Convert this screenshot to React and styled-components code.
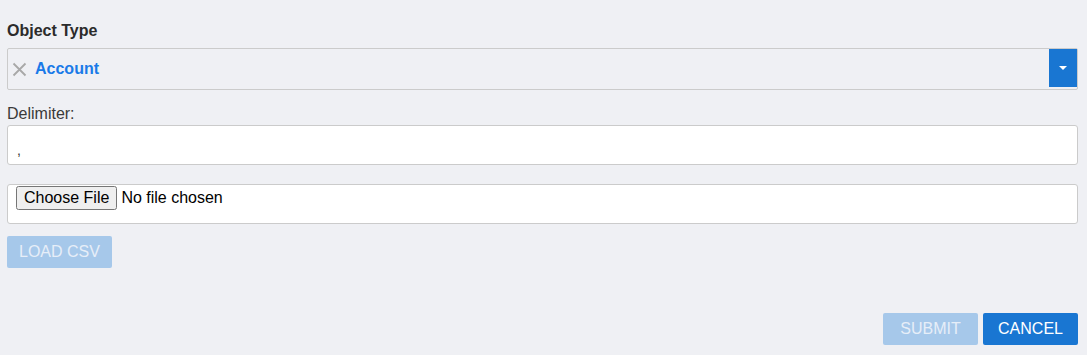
import React from "react";
import styled, { createGlobalStyle } from "styled-components";

const GlobalStyle = createGlobalStyle`
  html, body {
    margin: 0;
    padding: 0;
    background: #eff0f4;
    font-family: "Liberation Sans", Arial, sans-serif;
  }
`;

const Page = styled.div`
  display: flex;
  flex-direction: column;
  height: 355px;
  box-sizing: border-box;
  padding: 22px 9px 10px 7px;
`;

const Label = styled.label`
  display: block;
  font-size: 16px;
  font-weight: ${(p) => (p.bold ? 700 : 400)};
  color: ${(p) => (p.bold ? "#2b2b2b" : "#3a3a3a")};
  line-height: 18px;
  margin-bottom: ${(p) => (p.bold ? "8px" : "2px")};
`;

const SelectBox = styled.div`
  display: flex;
  align-items: center;
  height: 42px;
  box-sizing: border-box;
  border: 1px solid #cbcbcb;
  border-radius: 2px;
  background: #eff0f4;
  padding: 0 0 0 4px;
`;

const ClearIcon = styled.svg`
  width: 15px;
  height: 15px;
  flex: none;
  margin-right: 8px;
`;

const SelectedValue = styled.span`
  flex: 1;
  color: #1a7ae8;
  font-weight: 700;
  font-size: 16px;
`;

const DropButton = styled.button`
  width: 28px;
  height: 38px;
  align-self: flex-start;
  border: none;
  background: #1976d2;
  display: flex;
  align-items: center;
  justify-content: center;
  padding: 0;
  margin: 0;
`;

const Caret = styled.span`
  width: 0;
  height: 0;
  border-left: 4px solid transparent;
  border-right: 4px solid transparent;
  border-top: 4px solid #fff;
`;

const Field = styled.div`
  margin-top: ${(p) => p.top || 0}px;
`;

const TextInput = styled.input`
  display: block;
  width: 100%;
  height: 40px;
  box-sizing: border-box;
  border: 1px solid #cbcbcb;
  border-radius: 3px;
  background: #fff;
  padding: 10px 9px 0;
  font-family: "Liberation Sans", Arial, sans-serif;
  font-size: 14px;
  color: #333;
  outline: none;
`;

const FileBox = styled.div`
  height: 40px;
  box-sizing: border-box;
  border: 1px solid #cbcbcb;
  border-radius: 3px;
  background: #fff;
  padding: 1px 8px 0;
`;

const FileInput = styled.input`
  font-family: "Liberation Sans", Arial, sans-serif;
  font-size: 16px;
  color: #000;
`;

const Button = styled.button`
  height: 32px;
  border: none;
  border-radius: 2px;
  padding: 0 12px;
  min-width: ${(p) => p.minWidth || 0}px;
  font-family: "Liberation Sans", Arial, sans-serif;
  font-size: 16px;
  background: ${(p) => (p.disabled ? "#a6c8ea" : "#1976d2")};
  color: ${(p) => (p.disabled ? "#e6eef8" : "#fff")};
`;

const LoadRow = styled.div`
  margin-top: 12px;
`;

const Footer = styled.div`
  margin-top: auto;
  display: flex;
  justify-content: flex-end;
  gap: 5px;
`;

export default function App() {
  return (
    <>
      <GlobalStyle />
      <Page>
        <Label bold>Object Type</Label>
        <SelectBox>
          <ClearIcon viewBox="0 0 15 15">
            <path d="M1.5 1.5 L13.5 13.5 M13.5 1.5 L1.5 13.5" stroke="#a8a8a8" strokeWidth="1.8" />
          </ClearIcon>
          <SelectedValue>Account</SelectedValue>
          <DropButton>
            <Caret />
          </DropButton>
        </SelectBox>
        <Field top={15}>
          <Label>Delimiter:</Label>
          <TextInput defaultValue="," />
        </Field>
        <Field top={19}>
          <FileBox>
            <FileInput type="file" />
          </FileBox>
        </Field>
        <LoadRow>
          <Button disabled>LOAD CSV</Button>
        </LoadRow>
        <Footer>
          <Button disabled minWidth={95}>SUBMIT</Button>
          <Button minWidth={95}>CANCEL</Button>
        </Footer>
      </Page>
    </>
  );
}
